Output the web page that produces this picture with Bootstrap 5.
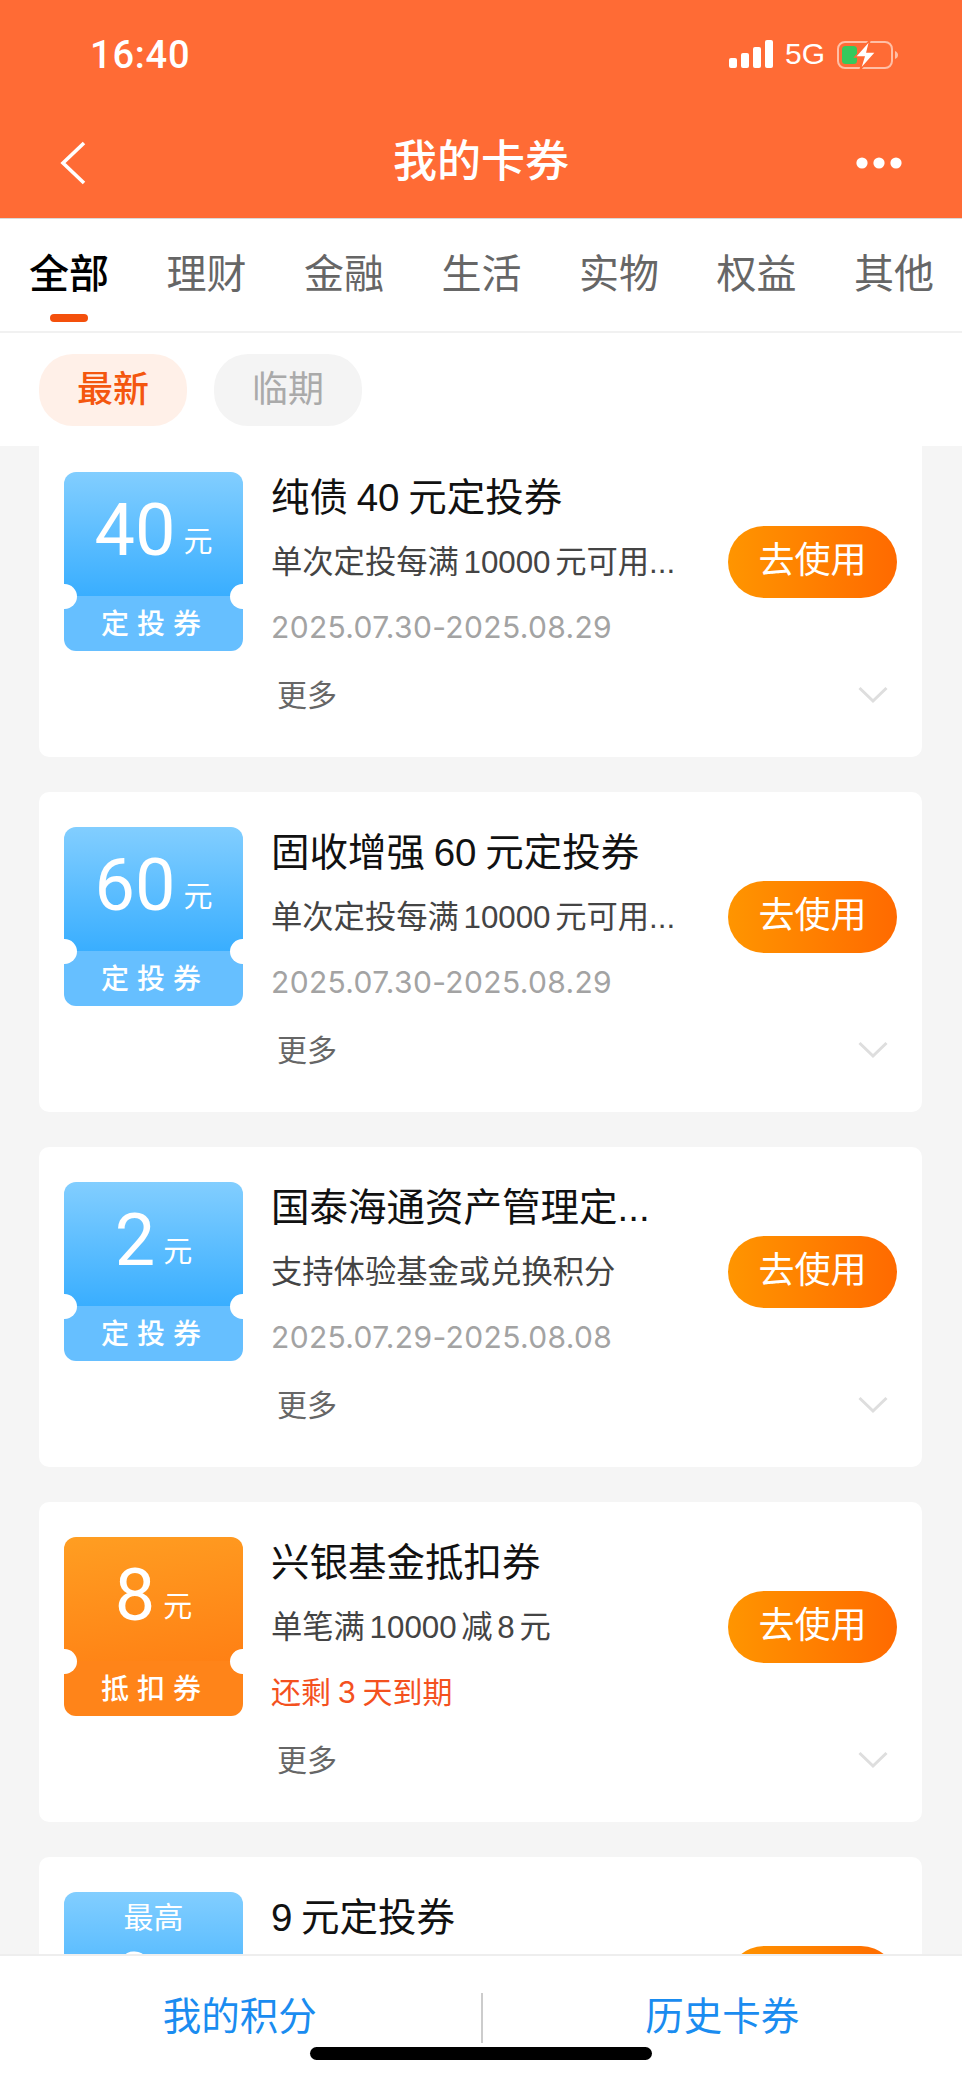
<!DOCTYPE html>
<html lang="zh">
<head>
  <meta charset="UTF-8">
  <title>我的卡券</title>
  <link href="https://cdn.jsdelivr.net/npm/bootstrap@5.3.3/dist/css/bootstrap.min.css" rel="stylesheet">
  <style>
    body { font-family: "Liberation Sans", "Noto Sans CJK SC", sans-serif; background: #f5f5f5; overflow: hidden; }
    .pantalla { height: 2082px; }
    .cabecera { background: #ff6b35; height: 219px; border-bottom: 1px solid #d9d9d9; color: #fff; }
    .estado { height: 108px; padding: 0 63px 0 90px; }
    .hora { font-family: Roboto, sans-serif; font-size: 38px; font-weight: 500; letter-spacing: .8px; line-height: 1; padding-top: 36px; }
    .iconos { padding-top: 40px; gap: 12px; }
    .texto-5g { font-size: 30px; line-height: 28px; }
    .barra { height: 110px; padding: 0 60px; }
    .barra-lado { width: 46px; }
    .titulo-barra { font-size: 44px; font-weight: 500; line-height: 1; margin: 0 0 2px; }
    .pestanas { background: #fff; height: 114px; padding: 0 28px 0 29px; border-bottom: 2px solid #f1f1f1; }
    .pestana { font-size: 40px; line-height: 56px; padding-top: 27px; color: #666; position: relative; }
    .pestana.activa { color: #000; font-weight: 500; }
    .pestana.activa::after { content: ""; position: absolute; left: 21px; top: 95px; width: 38px; height: 8px; border-radius: 4px; background: #f4500c; }
    .filtros { background: #fff; height: 113px; padding: 21px 39px 0; gap: 27px; }
    .chip { width: 148px; height: 72px; border-radius: 34px; font-size: 36px; line-height: 72px; text-align: center; background: #f4f4f4; color: #aaa; }
    .chip.activa { background: #fff0e8; color: #f4570f; font-weight: 500; }
    .lista { min-height: 0; padding: 0 40px 0 39px; }
    .lista-interior { margin-top: -9px; gap: 35px; }
    .cupon { background: #fff; border-radius: 10px; height: 320px; flex: none; padding: 35px 25px 0; }
    .ticket { width: 179px; height: 179px; flex: none; border-radius: 12px; overflow: hidden; position: relative; color: #fff; }
    .ticket::before, .ticket::after { content: ""; position: absolute; top: 112px; width: 25px; height: 25px; border-radius: 50%; background: #fff; }
    .ticket::before { left: -12px; }
    .ticket::after { right: -12px; }
    .ticket-alto { height: 124px; }
    .azul .ticket-alto { background: linear-gradient(180deg, #82ceff, #39aeff); }
    .azul .ticket-bajo { background: #66bfff; }
    .naranja .ticket-alto { background: linear-gradient(170deg, #ff9e22, #ff8014); }
    .naranja .ticket-bajo { background: #ff8419; }
    .ticket-bajo { height: 55px; font-size: 28px; font-weight: 500; letter-spacing: 8px; line-height: 58px; text-align: center; padding-left: 3px; }
    .monto { font-family: Roboto, "Liberation Sans", sans-serif; font-weight: 400; font-size: 72px; line-height: 1; padding-top: 23px; }
    .unidad { font-family: "Noto Sans CJK SC", sans-serif; font-size: 29px; margin-left: 8px; position: relative; top: -3px; }
    .maximo { font-size: 30px; line-height: 1; padding-top: 11px; }
    .maximo + .monto { padding-top: 11px; }
    .detalle { margin-left: 28px; min-width: 0; }
    .nombre { font-size: 38.5px; line-height: 50px; color: #111; white-space: nowrap; word-spacing: -2px; padding-top: 1px; }
    .regla { font-size: 31.3px; line-height: 40px; margin-top: 20px; color: #444; white-space: nowrap; word-spacing: -4px; }
    .fecha { font-family: Inter, "Noto Sans CJK SC", sans-serif; font-size: 30px; line-height: 40px; margin-top: 24px; color: #a3a3a3; white-space: nowrap; letter-spacing: .35px; }
    .fecha.aviso { color: #f4511e; word-spacing: -2px; letter-spacing: 0; }
    .boton-uso { width: 169px; height: 72px; border: 0; border-radius: 36px; padding: 0 0 2px; color: #fff; font-size: 36px; background: linear-gradient(90deg, #ff9500, #ff6a00); }
    .mas { padding: 25px 9px 0 213px; height: 63px; color: #666; font-size: 30px; line-height: 40px; }
    .flecha-mas { margin-top: 10px; }
    .pie { background: #fff; height: 128px; flex: none; border-top: 2px solid #eee; position: relative; }
    .pie-enlace { font-size: 38.5px; line-height: 50px; color: #1a8cf0; padding-top: 36px; }
    .pie-linea { width: 2px; height: 50px; background: #ccc; margin: 37px 0 0 1px; flex: none; }
    .indicador { position: absolute; left: 310px; top: 91px; width: 342px; height: 13px; border-radius: 7px; background: #000; }
  </style>
</head>
<body>

  <div class="pantalla d-flex flex-column">
    <header class="cabecera flex-shrink-0">
      <div class="estado d-flex justify-content-between">
        <div class="hora">16:40</div>
        <div class="iconos d-flex align-items-start">
          <svg width="44" height="28" viewBox="0 0 44 28" fill="#fff"><rect x="0" y="18" width="8" height="10" rx="2"/><rect x="12" y="13" width="8" height="15" rx="2"/><rect x="24" y="7" width="8" height="21" rx="2"/><rect x="36" y="0" width="8" height="28" rx="2"/></svg>
          <span class="texto-5g">5G</span>
          <svg width="62" height="30" viewBox="0 0 62 30" fill="none">
            <rect x="1" y="2" width="54" height="26" rx="7" stroke="#ffbfa6" stroke-width="2"/>
            <path d="M58 11c2 1 3 2 3 4s-1 3-3 4z" fill="#ffbfa6"/>
            <rect x="5" y="6" width="15" height="18" rx="3.5" fill="#36c95c"/>
            <path d="M33 0 L18 17 H27 L23 30 L39 12 H30 Z" fill="#fff" stroke="#ff6b35" stroke-width="1.5"/>
          </svg>
        </div>
      </div>
      <div class="barra d-flex justify-content-between align-items-center">
        <div class="barra-lado"><svg class="d-block" width="26" height="44" viewBox="0 0 26 44" fill="none"><path d="M24 2 L3 22 L24 42" stroke="#fff" stroke-width="3.6"/></svg></div>
        <h1 class="titulo-barra">我的卡券</h1>
        <div class="barra-lado"><svg class="d-block" width="46" height="12" viewBox="0 0 46 12" fill="#fff"><circle cx="6" cy="6" r="5.6"/><circle cx="23" cy="6" r="5.6"/><circle cx="40" cy="6" r="5.6"/></svg></div>
      </div>
    </header>

    <nav class="pestanas d-flex justify-content-between flex-shrink-0">
      <div class="pestana activa">全部</div>
      <div class="pestana">理财</div>
      <div class="pestana">金融</div>
      <div class="pestana">生活</div>
      <div class="pestana">实物</div>
      <div class="pestana">权益</div>
      <div class="pestana">其他</div>
    </nav>

    <div class="filtros d-flex flex-shrink-0">
      <div class="chip activa">最新</div>
      <div class="chip">临期</div>
    </div>

    <main class="lista flex-grow-1 overflow-hidden">
      <div class="lista-interior d-flex flex-column" id="listaCupones"></div>
    </main>

    <footer class="pie d-flex flex-shrink-0">
      <div class="pie-enlace flex-fill text-center">我的积分</div>
      <div class="pie-linea"></div>
      <div class="pie-enlace flex-fill text-center">历史卡券</div>
      <div class="indicador"></div>
    </footer>
  </div>

  <script>
    const cupones = [
      { monto: "40", tipo: "定投券", color: "azul", nombre: "纯债 40 元定投券", regla: "单次定投每满 10000 元可用...", fecha: "2025.07.30-2025.08.29" },
      { monto: "60", tipo: "定投券", color: "azul", nombre: "固收增强 60 元定投券", regla: "单次定投每满 10000 元可用...", fecha: "2025.07.30-2025.08.29" },
      { monto: "2", tipo: "定投券", color: "azul", nombre: "国泰海通资产管理定...", regla: "支持体验基金或兑换积分", fecha: "2025.07.29-2025.08.08" },
      { monto: "8", tipo: "抵扣券", color: "naranja", nombre: "兴银基金抵扣券", regla: "单笔满 10000 减 8 元", fecha: "还剩 3 天到期", aviso: true },
      { monto: "9", tipo: "定投券", color: "azul", nombre: "9 元定投券", regla: "单次定投每满 10000 元可用...", fecha: "2025.07.30-2025.08.29", maximo: true }
    ];

    const lista = document.getElementById("listaCupones");

    cupones.forEach(c => {
      const tarjeta = document.createElement("div");
      tarjeta.className = "cupon";
      tarjeta.innerHTML = `
        <div class="d-flex align-items-center">
          <div class="ticket ${c.color}">
            <div class="ticket-alto text-center">
              ${c.maximo ? '<div class="maximo">最高</div>' : ''}
              <div class="monto">${c.monto}<span class="unidad">元</span></div>
            </div>
            <div class="ticket-bajo">${c.tipo}</div>
          </div>
          <div class="detalle flex-grow-1 align-self-start">
            <div class="nombre">${c.nombre}</div>
            <div class="regla">${c.regla}</div>
            <div class="fecha ${c.aviso ? 'aviso' : ''}">${c.fecha}</div>
          </div>
          <button class="boton-uso flex-shrink-0">去使用</button>
        </div>
        <div class="mas d-flex justify-content-between">
          <span>更多</span>
          <svg class="flecha-mas" width="30" height="18" viewBox="0 0 30 18" fill="none"><path d="M1.5 2 L15 15 L28.5 2" stroke="#dedede" stroke-width="3"/></svg>
        </div>
      `;
      lista.appendChild(tarjeta);
    });
  </script>

  <script src="https://cdn.jsdelivr.net/npm/bootstrap@5.3.3/dist/js/bootstrap.bundle.min.js"></script>
</body>
</html>
